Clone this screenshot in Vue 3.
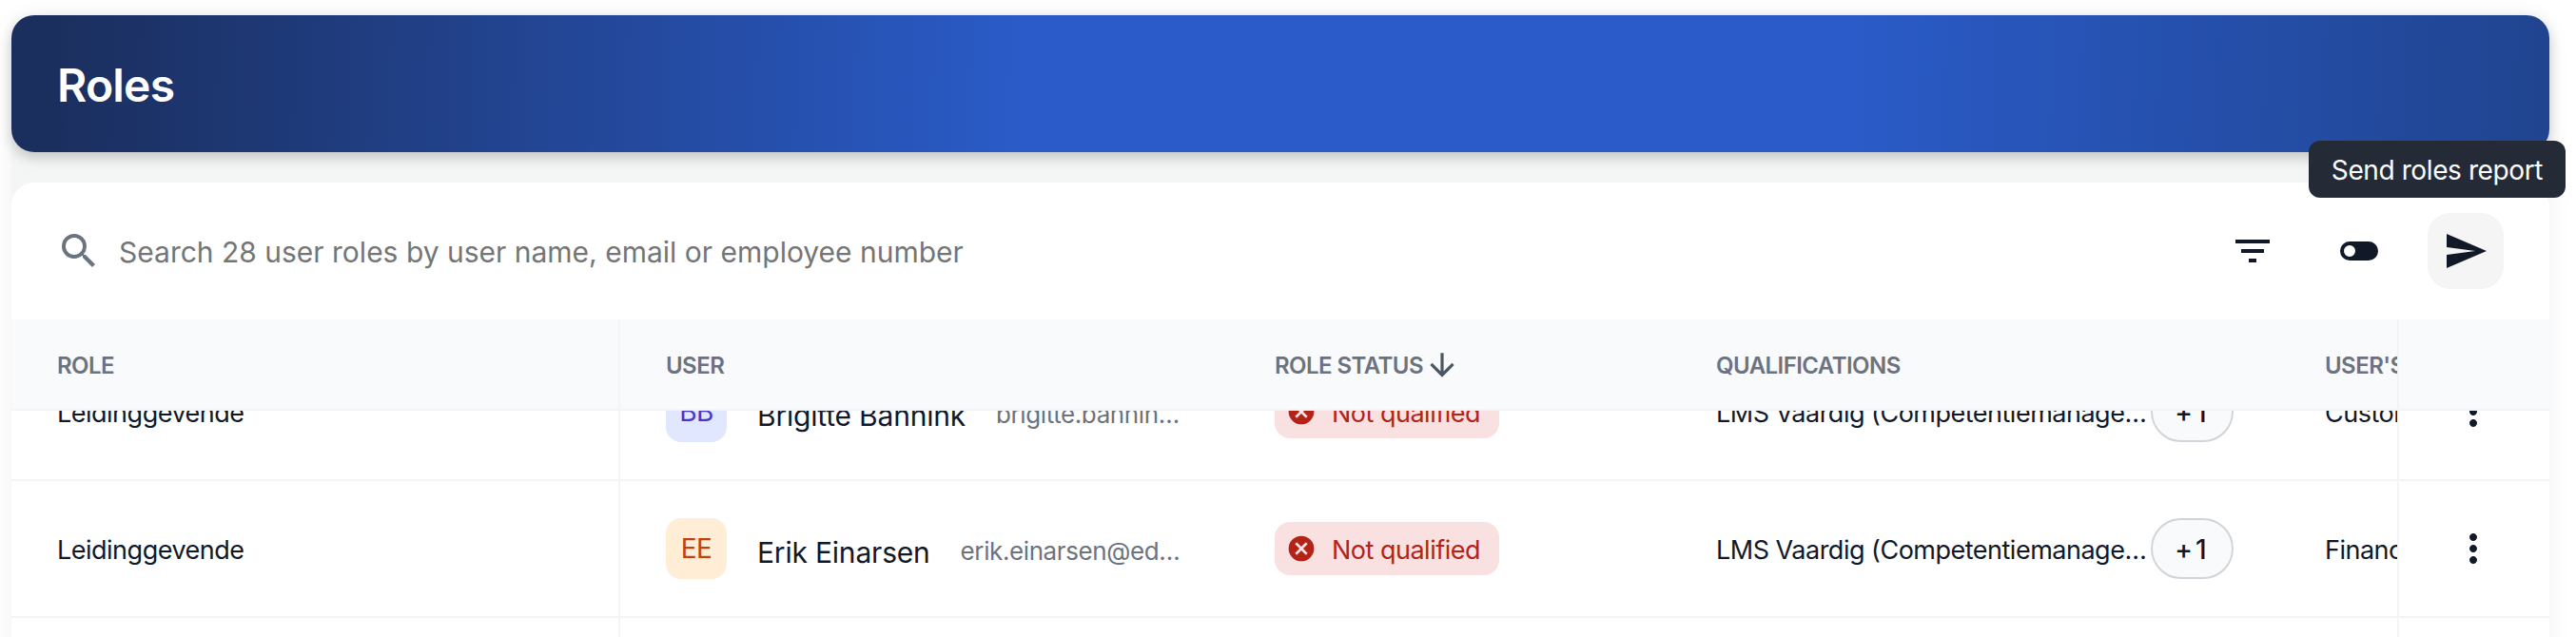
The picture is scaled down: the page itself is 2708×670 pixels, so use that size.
<script setup>
const columns = [
  { key: 'role', label: 'Role', width: 640 },
  { key: 'user', label: 'User', width: 640 },
  { key: 'status', label: 'Role status', width: 464, sorted: true },
  { key: 'quals', label: 'Qualifications', width: 640 },
  { key: 'dept', label: "User's department", width: 640 },
]
const rows = [
  { role: 'Leidinggevende', initials: 'BB', tone: 'blue', name: 'Brigitte Bannink', email: 'brigitte.bannink@edufit.nl', dept: 'Customer Success' },
  { role: 'Leidinggevende', initials: 'EE', tone: 'orange', name: 'Erik Einarsen', email: 'erik.einarsen@edufit.nl', dept: 'Finance' },
  { role: '', initials: '', tone: '', name: '', email: '', dept: '' },
]
</script>

<template>
  <div class="page">
    <div class="shell">
      <header class="hero"><h1>Roles</h1></header>
      <section class="card">
        <div class="toolbar">
          <svg class="search-icon" viewBox="0 0 24 24"><path d="M15.5 14h-.79l-.28-.27A6.471 6.471 0 0 0 16 9.5 6.5 6.5 0 1 0 9.5 16c1.61 0 3.09-.59 4.23-1.57l.27.28v.79l5 4.99L20.49 19l-4.99-5zm-6 0C7.01 14 5 11.99 5 9.5S7.01 5 9.5 5 14 7.01 14 9.5 11.99 14 9.5 14z"/></svg>
          <span class="placeholder">Search 28 user roles by user name, email or employee number</span>
          <div class="actions">
            <button class="icon-btn"><svg viewBox="0 0 24 24"><path d="M10 18h4v-2h-4v2zM3 6v2h18V6H3zm3 7h12v-2H6v2z"/></svg></button>
            <button class="icon-btn"><svg viewBox="0 0 24 24"><path fill-rule="evenodd" d="M7 7h10a5 5 0 0 1 0 10H7A5 5 0 0 1 7 7zm0 8a3 3 0 1 0 0-6 3 3 0 0 0 0 6z"/></svg></button>
            <button class="icon-btn active"><svg viewBox="0 0 24 24"><path d="M2.01 21 23 12 2.01 3 2 10l15 2-15 2z"/></svg></button>
            <div class="tooltip">Send roles report</div>
          </div>
        </div>
        <div class="table">
          <div class="thead">
            <div class="cols">
              <div v-for="c in columns" :key="c.key" class="th" :class="c.key" :style="{ width: c.width + 'px' }">
                <span>{{ c.label }}</span>
                <svg v-if="c.sorted" class="sort" viewBox="0 0 24 24"><path d="M20 12l-1.41-1.41L13 16.17V4h-2v12.17l-5.58-5.59L4 12l8 8 8-8z"/></svg>
              </div>
            </div>
            <div class="sticky"></div>
          </div>
          <div class="tbody">
            <div v-for="(r, i) in rows" :key="i" class="tr">
              <div class="cols">
                <div class="td role" :style="{ width: columns[0].width + 'px' }">{{ r.role }}</div>
                <div class="td user" :style="{ width: columns[1].width + 'px' }">
                  <template v-if="r.name">
                    <span class="avatar" :class="r.tone">{{ r.initials }}</span>
                    <span class="name">{{ r.name }}</span>
                    <span class="email">{{ r.email }}</span>
                  </template>
                </div>
                <div class="td" :style="{ width: columns[2].width + 'px' }">
                  <span v-if="r.name" class="badge">
                    <svg viewBox="0 0 24 24"><path d="M12 2a10 10 0 1 0 0 20 10 10 0 0 0 0-20zm5 13.59L15.59 17 12 13.41 8.41 17 7 15.59 10.59 12 7 8.41 8.41 7 12 10.59 15.59 7 17 8.41 13.41 12 17 15.59z"/></svg>
                    <span class="badge-text">Not qualified</span>
                  </span>
                </div>
                <div class="td" :style="{ width: columns[3].width + 'px' }">
                  <template v-if="r.name">
                    <span class="qual">LMS Vaardig (Competentiemanagement)</span>
                    <span class="more">+1</span>
                  </template>
                </div>
                <div class="td dept" :style="{ width: columns[4].width + 'px' }">{{ r.dept }}</div>
              </div>
              <div class="sticky">
                <svg v-if="r.name" class="kebab" viewBox="0 0 24 24"><path d="M12 8c1.1 0 2-.9 2-2s-.9-2-2-2-2 .9-2 2 .9 2 2 2zm0 2c-1.1 0-2 .9-2 2s.9 2 2 2 2-.9 2-2-.9-2-2-2zm0 6c-1.1 0-2 .9-2 2s.9 2 2 2 2-.9 2-2-.9-2-2-2z"/></svg>
              </div>
            </div>
          </div>
        </div>
      </section>
    </div>
  </div>
</template>

<style>
html, body { margin: 0; background: #fff; overflow: hidden; }
</style>

<style scoped>
.page {
  width: 2708px;
  height: 670px;
  box-sizing: border-box;
  padding: 16px 28px 0 12px;
  overflow: hidden;
  font-family: Inter, "Liberation Sans", sans-serif;
  color: #111827;
}
.shell {
  height: 720px;
  border-radius: 24px;
  background: #f4f5f5;
  box-shadow: 0 0 24px rgba(0, 0, 0, .06);
}
.hero {
  height: 144px;
  border-radius: 24px;
  display: flex;
  align-items: center;
  padding-left: 48px;
  background: linear-gradient(92deg, #1b2f5f 2%, #2a5bc8 40%, #2a5bc8 72%, #20448f 100%);
  box-shadow: 0 6px 14px rgba(0, 0, 0, .2);
}
.hero h1 { margin: 2px 0 0; font-size: 48px; font-weight: 600; letter-spacing: -.8px; color: #fff; }
.card {
  margin-top: 32px;
  background: #fff;
  border-radius: 24px 24px 0 0;
  height: 544px;
}
.toolbar {
  height: 144px;
  display: flex;
  align-items: center;
  padding-left: 47px;
  position: relative;
}
.search-icon { width: 48px; height: 48px; fill: #6b7280; margin-right: 18px; }
.placeholder { font-size: 30px; color: #757575; padding-top: 1px; }
.actions { margin-left: auto; display: flex; align-items: center; margin-right: 48px; position: relative; }
.icon-btn {
  width: 80px;
  height: 80px;
  padding: 0;
  border: 0;
  background: none;
  border-radius: 24px;
  display: flex;
  align-items: center;
  justify-content: center;
  margin-left: 32px;
}
.icon-btn svg { width: 48px; height: 48px; fill: #111827; }
.icon-btn.active { background: #f5f5f5; }
.tooltip {
  position: absolute;
  top: -76px;
  right: -65px;
  height: 60px;
  box-sizing: border-box;
  padding: 2px 24px 0;
  display: flex;
  align-items: center;
  border-radius: 12px;
  background: #252a37;
  color: #fff;
  font-size: 28px;
  letter-spacing: -.4px;
  white-space: nowrap;
}
.thead, .tr { display: flex; }
.thead { height: 94px; background: #f9fafb; border-bottom: 2px solid #f3f4f6; position: relative; z-index: 1; }
.cols { display: flex; flex: 0 0 2508px; width: 2508px; overflow: hidden; }
.tr { background: #fff; }
.sticky {
  flex: 0 0 158px;
  border-left: 2px solid #f3f4f6;
  display: flex;
  align-items: center;
  justify-content: center;
}
.th, .td {
  box-sizing: border-box;
  flex: none;
  padding-left: 48px;
  display: flex;
  align-items: center;
  white-space: nowrap;
}
.th { font-size: 24px; font-weight: 600; letter-spacing: -.55px; color: #6b7280; text-transform: uppercase; gap: 1px; padding-top: 2px; }
.th.role, .td.role { border-right: 2px solid #f3f4f6; }
.sort { width: 38px; height: 38px; fill: #4b5563; }
.tbody { height: 238px; overflow: hidden; }
.tr { height: 142px; border-bottom: 2px solid #f3f4f6; }
.tr:first-child { margin-top: -70px; }
.td { font-size: 27px; letter-spacing: -.5px; }
.td.role, .td.dept { padding-top: 3px; }
.avatar {
  width: 64px;
  height: 64px;
  flex: none;
  border-radius: 16px;
  display: flex;
  align-items: center;
  justify-content: center;
  font-size: 28px;
}
.avatar.blue { background: #e0e7ff; color: #4338ca; }
.avatar.orange { background: #ffedd5; color: #c2410c; }
.name { margin-left: 32px; font-size: 30px; letter-spacing: -.2px; padding-top: 8px; }
.email {
  margin-left: 32px;
  flex: 1;
  min-width: 0;
  margin-right: 49px;
  overflow: hidden;
  text-overflow: ellipsis;
  font-size: 26px;
  letter-spacing: -.4px;
  color: #6b7280;
  padding-top: 4px;
}
.badge {
  height: 56px;
  box-sizing: border-box;
  padding: 0 20px 0 12px;
  display: inline-flex;
  align-items: center;
  gap: 16px;
  border-radius: 16px;
  background: #fae1e1;
  color: #b42318;
}
.badge-text { padding-top: 2px; }
.badge svg { width: 32px; height: 32px; fill: #b42318; flex: none; }
.qual { width: 453px; overflow: hidden; text-overflow: ellipsis; padding-top: 3px; }
.more {
  margin-left: 4px;
  width: 87px;
  height: 64px;
  box-sizing: border-box;
  border: 2px solid #d1d5db;
  border-radius: 32px;
  background: #f9fafb;
  display: flex;
  align-items: center;
  justify-content: center;
  font-size: 28px;
  font-weight: 500;
  letter-spacing: 3px;
  padding-top: 2px;
}
.kebab { width: 48px; height: 48px; fill: #111827; margin-right: 3px; }
</style>
